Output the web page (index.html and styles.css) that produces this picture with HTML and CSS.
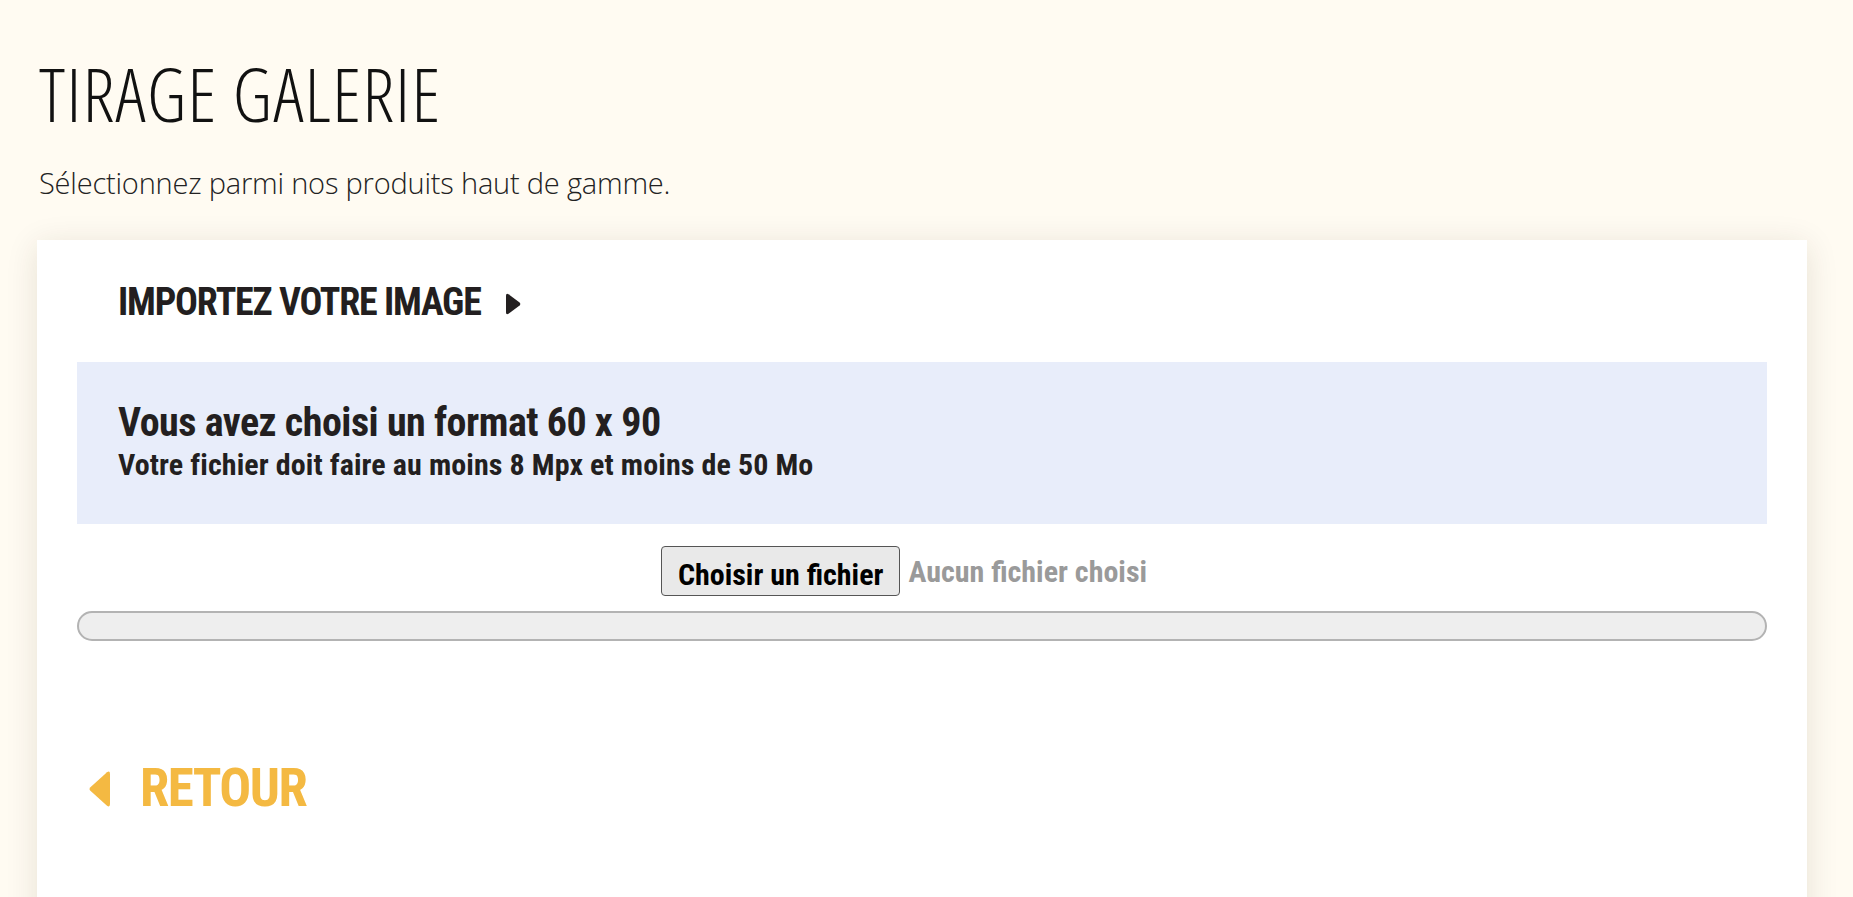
FILE: index.html
```html
<!DOCTYPE html>
<html>

<head>
    <title>Tirage Galerie</title>
    <link rel="stylesheet" href="styles.css">
</head>

<body>
    <div class="page">
        <h1 class="title">TIRAGE GALERIE</h1>
        <p class="intro">Sélectionnez parmi nos produits haut de gamme.</p>

        <div class="card">
            <h2 class="step">
                IMPORTEZ VOTRE IMAGE
                <svg class="step-arrow" width="15" height="22" viewBox="0 0 15 22">
                    <path d="M2.5 1.2 L13.6 9.4 Q15 11 13.6 12.6 L2.5 20.8 Q0 22.2 0 19.2 V2.8 Q0 -0.2 2.5 1.2 Z" fill="#231f20" />
                </svg>
            </h2>

            <div class="notice">
                <h3>Vous avez choisi un format 60 x 90</h3>
                <p>Votre fichier doit faire au moins 8 Mpx et moins de 50 Mo</p>
            </div>

            <div class="upload">
                <label class="file-btn" for="file">Choisir un fichier</label>
                <span class="file-name">Aucun fichier choisi</span>
                <input type="file" id="file" class="file-input">
            </div>

            <div class="progress"></div>

            <a class="back" href="#">
                <svg class="back-arrow" width="21" height="36" viewBox="0 0 21 36">
                    <path d="M18 1.2 Q21 -0.6 21 3 V33 Q21 36.6 18 34.8 L1.4 19.8 Q-0.4 18 1.4 16.2 Z" fill="#f4b942" />
                </svg>
                RETOUR
            </a>
        </div>
    </div>
</body>

</html>
```

FILE: styles.css
```css
body {
    margin: 0;
    background-color: #fffbf2;
    color: #231f20;
    font-family: "Roboto Condensed", "Roboto", sans-serif;
}

.page {
    padding: 50px 46px 0 37px;
}

.title {
    margin: 0;
    font-family: "Open Sans", sans-serif;
    font-weight: 300;
    font-stretch: 75%;
    font-size: 74px;
    line-height: 1.2;
    letter-spacing: 1.4px;
    color: #111;
    padding-left: 2px;
}

.intro {
    margin: 25px 0 0;
    font-family: "Open Sans", sans-serif;
    font-weight: 300;
    font-size: 29px;
    line-height: 1.3;
    letter-spacing: -0.2px;
    color: #222;
    padding-left: 2px;
}

.card {
    margin-top: 39px;
    min-height: 700px;
    padding: 40px 40px 0;
    background-color: #fff;
    box-shadow: 0 5px 30px rgba(60, 40, 0, 0.12);
}

.step {
    display: flex;
    align-items: center;
    gap: 25px;
    margin: 0;
    padding-left: 41px;
    font-size: 38px;
    font-weight: 700;
    letter-spacing: -1.2px;
    line-height: 1.2;
}

.step-arrow {
    margin-top: 2px;
}

.notice {
    margin-top: 36px;
    padding: 37px 41px 41px;
    background-color: #e8edfa;
}

.notice h3 {
    margin: 0;
    font-size: 40px;
    font-weight: 700;
    letter-spacing: -0.5px;
    line-height: 48px;
}

.notice p {
    margin: 0;
    font-size: 30px;
    font-weight: 700;
    letter-spacing: 0.1px;
    line-height: 36px;
}

.upload {
    display: flex;
    justify-content: center;
    align-items: center;
    gap: 8px;
    margin-top: 22px;
    padding-right: 36px;
    font-size: 30px;
    font-weight: 700;
}

.file-btn {
    padding: 12px 16px 4px;
    line-height: 32px;
    border: 1px solid #555;
    border-radius: 4px;
    background-color: #e9e9e9;
    color: #000;
    cursor: pointer;
}

.file-name {
    color: #9a9a9a;
}

.file-input {
    display: none;
}

.progress {
    height: 26px;
    margin-top: 15px;
    border: 2px solid #b3b3b3;
    border-radius: 15px;
    background-color: #eeeeee;
}

.back {
    display: inline-flex;
    align-items: center;
    gap: 30px;
    margin-top: 116px;
    padding-left: 12px;
    font-size: 53px;
    font-weight: 700;
    line-height: 1.2;
    letter-spacing: -1.5px;
    color: #f4b942;
    text-decoration: none;
}
```
